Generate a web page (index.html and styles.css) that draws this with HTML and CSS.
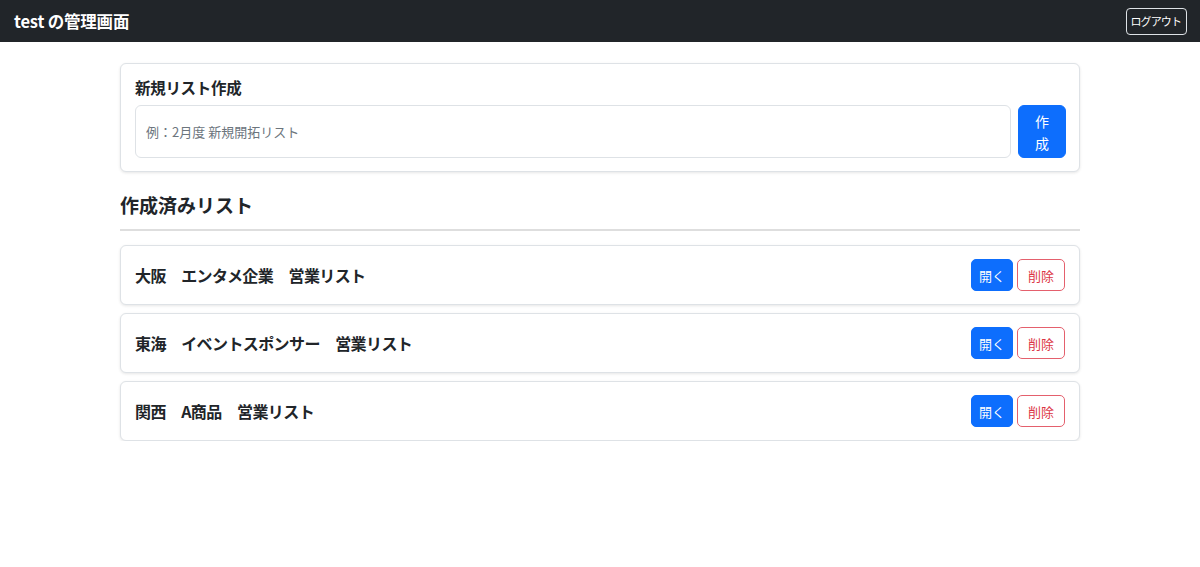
FILE: index.html
```html
<!DOCTYPE html>
<html lang="ja">
<head>
    <meta charset="UTF-8">
    <meta name="viewport" content="width=device-width, initial-scale=1.0">
    <title>test の管理画面</title>
    <link rel="stylesheet" href="styles.css">
</head>
<body>

    <nav class="navbar">
        <span class="brand">test の管理画面</span>
        <button class="btn-logout">ログアウト</button>
    </nav>

    <div class="container">
        <div class="card new-card">
            <h2 class="card-title">新規リスト作成</h2>
            <div class="new-form">
                <input type="text" class="new-input" placeholder="例：2月度 新規開拓リスト">
                <button class="btn btn-primary btn-create">作成</button>
            </div>
        </div>

        <h3 class="section-title">作成済みリスト</h3>
        <hr class="divider">

        <div class="list">
            <div class="card list-item">
                <span class="item-name">大阪　エンタメ企業　営業リスト</span>
                <div class="item-actions">
                    <button class="btn btn-primary">開く</button>
                    <button class="btn btn-danger-outline">削除</button>
                </div>
            </div>
            <div class="card list-item">
                <span class="item-name">東海　イベントスポンサー　営業リスト</span>
                <div class="item-actions">
                    <button class="btn btn-primary">開く</button>
                    <button class="btn btn-danger-outline">削除</button>
                </div>
            </div>
            <div class="card list-item">
                <span class="item-name">関西　A商品　営業リスト</span>
                <div class="item-actions">
                    <button class="btn btn-primary">開く</button>
                    <button class="btn btn-danger-outline">削除</button>
                </div>
            </div>
        </div>
    </div>

</body>
</html>
```

FILE: styles.css
```css
body {
    font-family: "Noto Sans CJK JP", "Noto Sans", sans-serif;
    background-color: #ffffff;
    color: #212529;
    margin: 0;
}
.navbar {
    display: flex;
    justify-content: space-between;
    align-items: center;
    height: 42px;
    padding: 0 13px 0 14px;
    background-color: #212529;
    box-sizing: border-box;
}
.brand {
    color: white;
    font-size: 16.5px;
    font-weight: bold;
    letter-spacing: -0.2px;
}
.btn-logout {
    font-family: inherit;
    font-size: 11px;
    letter-spacing: -0.9px;
    color: white;
    background: transparent;
    border: 1px solid #dee2e6;
    border-radius: 4px;
    height: 27px;
    padding: 0 5px 0 4px;
}
.container {
    max-width: 960px;
    margin: 21px auto 0;
}
.card {
    border: 1px solid #dee2e6;
    border-radius: 6px;
    box-shadow: 0 1px 3px rgba(0, 0, 0, 0.1);
    background-color: white;
}
.new-card {
    padding: 12px 13px 13px 14px;
}
.card-title {
    font-size: 15.5px;
    font-weight: bold;
    margin: 0 0 7px;
    line-height: 22px;
    letter-spacing: -0.3px;
}
.new-form {
    display: flex;
    gap: 7px;
}
.new-input {
    flex: 1;
    font-family: inherit;
    font-size: 13px;
    height: 53px;
    padding: 0 10px;
    border: 1px solid #dee2e6;
    border-radius: 6px;
    box-sizing: border-box;
    color: #212529;
}
.new-input::placeholder {
    color: #6c757d;
}
.btn {
    font-family: inherit;
    font-size: 13px;
    border-radius: 5px;
    cursor: pointer;
    height: 32px;
    padding: 0 7px;
}
.btn-primary {
    background-color: #0d6efd;
    border: 1px solid #0d6efd;
    color: white;
}
.btn-danger-outline {
    background-color: white;
    border: 1px solid #e4606d;
    color: #dc3545;
    padding: 0 10px;
}
.btn-create {
    width: 48px;
    height: 53px;
    font-size: 14px;
    line-height: 22px;
    padding: 0 12px;
    border-radius: 6px;
}
.section-title {
    font-size: 19px;
    font-weight: 600;
    margin: 18px 0 0;
    line-height: 30px;
}
.divider {
    border: none;
    border-top: 2px solid #dedede;
    margin: 9px 0 14px;
}
.list {
    display: flex;
    flex-direction: column;
    gap: 8px;
}
.list-item {
    display: flex;
    justify-content: space-between;
    align-items: center;
    height: 60px;
    padding: 0 14px;
    box-sizing: border-box;
}
.item-name {
    font-size: 16px;
    font-weight: bold;
    letter-spacing: -0.6px;
}
.item-actions {
    display: flex;
    gap: 4px;
}
```
